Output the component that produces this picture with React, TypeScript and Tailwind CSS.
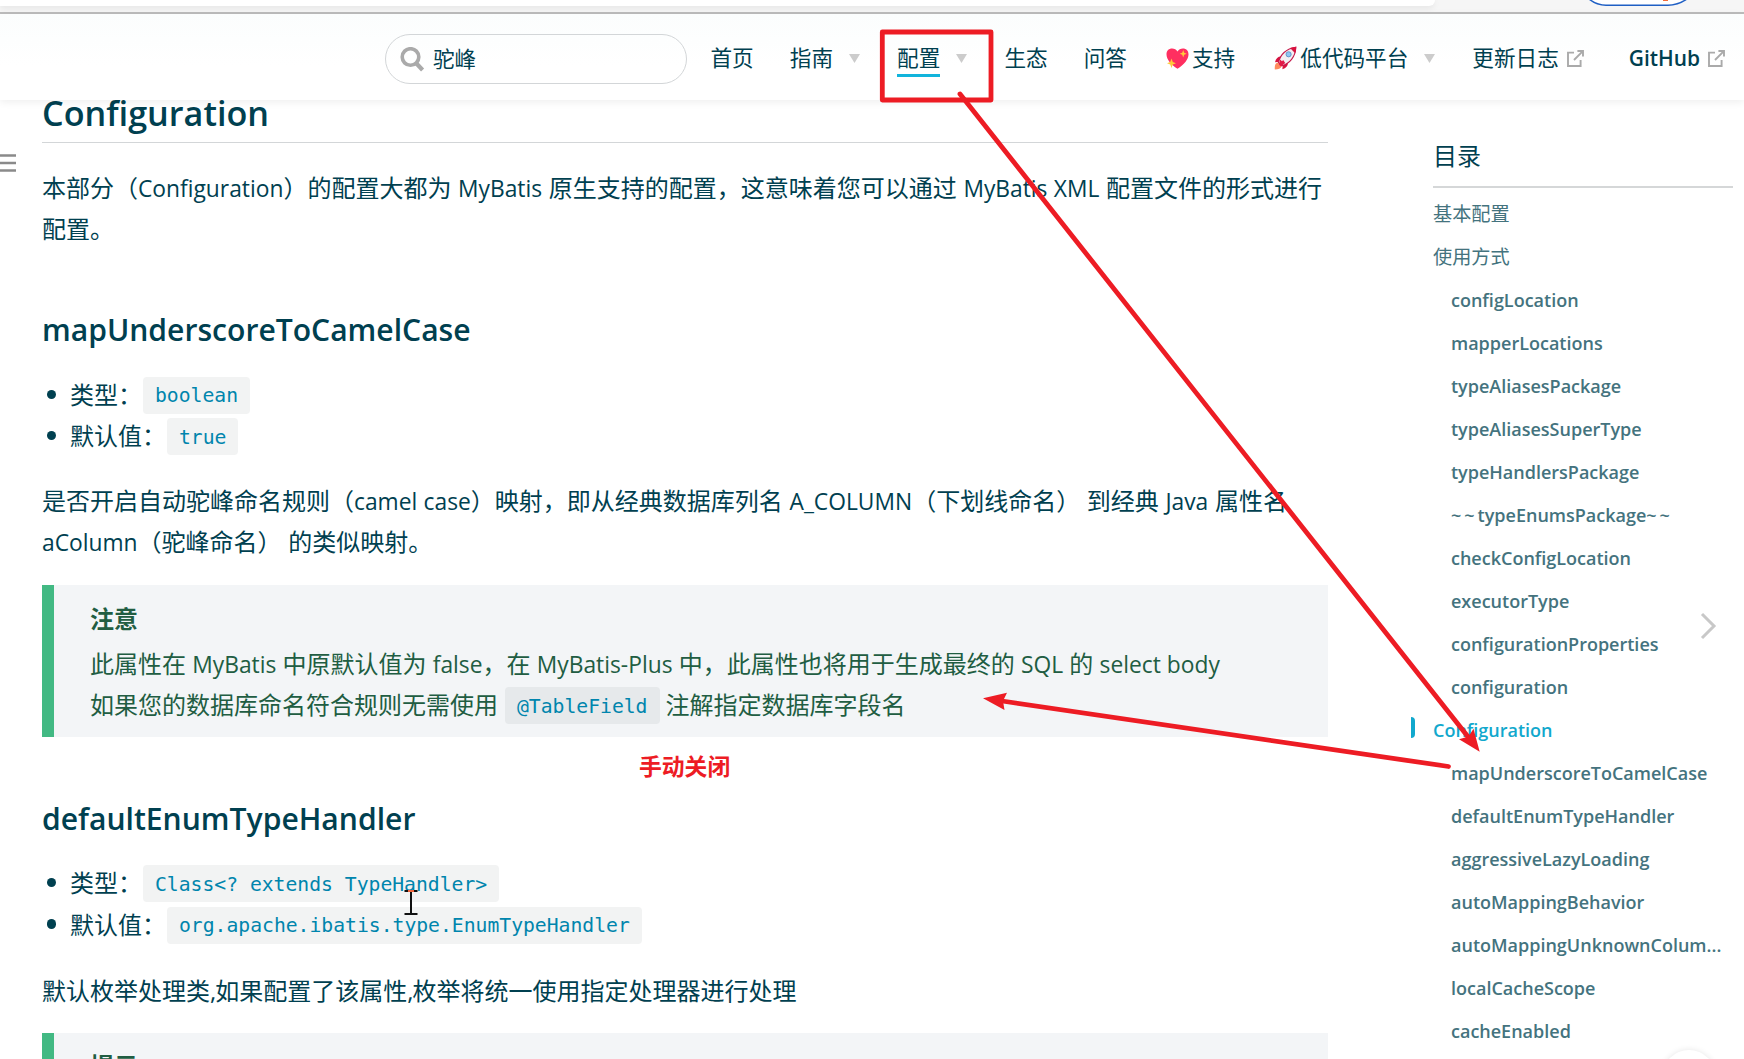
import type { ReactNode } from "react";

/* Latin run set slightly smaller than the surrounding Chinese text */
function L({ children }: { children: ReactNode }) {
  return <span className="text-[22.8px] leading-none">{children}</span>;
}

function Code({ children }: { children: ReactNode }) {
  return (
    <code className="mt-[2px] inline-flex h-[37px] items-center rounded bg-[rgba(27,31,35,0.055)] px-3 pt-0.5 align-middle font-['DejaVu_Sans_Mono',monospace] text-[19.72px] leading-none whitespace-pre text-[#0085ad]">
      {children}
    </code>
  );
}

function Item({ label, children }: { label: string; children: ReactNode }) {
  return (
    <li className="flex h-[41.4px] items-center">
      <span className="mr-[15px] ml-[4.500px] size-[9.500px] rounded-full bg-[#004050]" />
      <span className="mr-px -ml-px leading-[41px]">{label}</span>
      <Code>{children}</Code>
    </li>
  );
}

function H3({ children }: { children: ReactNode }) {
  return <h3 className="text-[30.1px] leading-[42px] font-semibold">{children}</h3>;
}

function Caret() {
  return (
    <svg className="mr-px ml-[16px] h-[9px] w-[11px]" viewBox="0 0 11 9">
      <path d="M0 0H11L5.5 9Z" fill="#ccc" />
    </svg>
  );
}

function External() {
  return (
    <svg className="mr-[9px] ml-2 size-[17px]" viewBox="0 0 17 17" fill="none" stroke="#aaa" strokeWidth="1.9">
      <path d="M7 2.6H1V16H13.6V10" />
      <path d="M10.4 1H16V6.4M15.6 1.4L7 10" />
    </svg>
  );
}

function Heart() {
  return (
    <svg className="mr-[3px] ml-[3px] h-[23px] w-[23px]" viewBox="0 0 23 23">
      <path d="M11.5 21.8C5 17.5 0.5 12.5 0.5 7.2 0.5 3.5 3 1.4 6 1.4c2.400 0 4.400 1.200 5.500 3.200C12.600 2.600 14.600 1.400 17 1.400c3 0 5.500 2.100 5.500 5.800 0 5.300-4.500 10.300-11 14.600Z" fill="#ff2f60" />
      <path d="M17.200 3l1 2.700 2.500 1-2.500 1-1 2.700-1-2.700-2.500-1 2.500-1ZM5.500 11.500l1.300 3.500 3.200 1.200-3.200 1.200-1.300 3.500-1.300-3.500L1 16.200 4.200 15Z" fill="#ffc93a" />
    </svg>
  );
}

function Rocket() {
  return (
    <svg className="mr-[3px] ml-[3px] h-[24px] w-[23px]" viewBox="0 0 23 24">
      <path d="M0.800 23.500C0.500 19.500 1.500 16.800 4 16.500l3.500 3.800C6.800 22.500 4.500 23.500 0.800 23.500Z" fill="#ff8a5c" />
      <path d="M7 10.500C4 10.500 1.800 12.500 1 16.200l4.500-.5ZM14 17c0 3-2 5.200-5.600 6.300l.4-4.800Z" fill="#d8123f" />
      <path d="M4.500 16.500C6 9 12 2.500 21.800 1.200 21.500 11 15.500 17.500 8 19.800Z" fill="#f3eef2" stroke="#c4184a" strokeWidth="1.100" />
      <path d="M16 1.900C18 1.400 20 1.100 22.200 0.800c0 2.400-.3 4.400-1 6.400Z" fill="#d8123f" />
      <circle cx="14.600" cy="8.300" r="2.600" fill="#8ec5f4" stroke="#4b7fb5" strokeWidth=".7" />
      <path d="M5 18.800L6 13.500l2 1.800 1.200-1.300 2 3-4.200 3.500Z" fill="#e11a48" />
    </svg>
  );
}

const toc: [string, "top" | "sub" | "active"][] = [
  ["基本配置", "top"],
  ["使用方式", "top"],
  ["configLocation", "sub"],
  ["mapperLocations", "sub"],
  ["typeAliasesPackage", "sub"],
  ["typeAliasesSuperType", "sub"],
  ["typeHandlersPackage", "sub"],
  ["~~typeEnumsPackage~~", "sub"],
  ["checkConfigLocation", "sub"],
  ["executorType", "sub"],
  ["configurationProperties", "sub"],
  ["configuration", "sub"],
  ["Configuration", "active"],
  ["mapUnderscoreToCamelCase", "sub"],
  ["defaultEnumTypeHandler", "sub"],
  ["aggressiveLazyLoading", "sub"],
  ["autoMappingBehavior", "sub"],
  ["autoMappingUnknownColum...", "sub"],
  ["localCacheScope", "sub"],
  ["cacheEnabled", "sub"],
];

const tocClass = {
  top: "text-[19.2px] text-[#44737e]",
  sub: "pt-[0.600px] pl-[18px] text-[18px] font-semibold text-[#44737e]",
  active: "pt-[0.600px] text-[18px] font-semibold text-[#11a8cd]",
};

/* Tildes are spaced wider than the letters they surround */
function TocLabel({ text }: { text: string }) {
  return text.split(/(~~)/).map((part, i) =>
    part === "~~" ? (
      <span key={i} className="tracking-[3px]">{part}</span>
    ) : (
      part
    ),
  );
}

function BrowserEdge() {
  return (
    <div className="relative h-[14px] shrink-0 overflow-hidden border-b-2 border-[#bcbcbc] bg-[#f6f6f6]">
      <div className="h-1.5 w-[1435px] rounded-br-[16px] bg-white shadow-[0_2px_6px_rgba(0,0,0,0.08)]" />
      <svg className="absolute top-0 left-[1586px] h-[8px] w-[106px]" viewBox="0 0 106 8" fill="none">
        <path d="M3 -1C8 3 13 5.200 20 5.200H82C89 5.200 95 3 101 -1" fill="#fff" stroke="#1f5fc4" strokeWidth="1.500" />
        <path d="M77 0h5" stroke="#f26b3a" strokeWidth="2" />
      </svg>
    </div>
  );
}

function Header() {
  return (
    <header className="relative z-10 flex h-[86px] shrink-0 items-center bg-linear-to-b from-[#fbfdfd] to-white to-60% pt-[2px] pl-[385px] text-[21.6px] leading-[40px] whitespace-nowrap shadow-[0_2px_8px_rgba(0,0,0,0.07)]">
      <div className="mt-px flex h-[50px] w-[302px] shrink-0 items-center rounded-full border border-[#d3d6d8] pl-[14px]">
        <svg className="mt-px size-[25px]" viewBox="0 0 25 25" fill="none" stroke="#aaa">
          <circle cx="10.500" cy="10" r="8.300" strokeWidth="3.600" />
          <path d="M16 16l6.600 7" strokeWidth="4.200" />
        </svg>
        <span className="ml-[8px]">驼峰</span>
      </div>
      <nav className="ml-[23.500px] flex items-center gap-[36.100px]">
        <span>首页</span>
        <span className="flex items-center">指南<Caret /></span>
        <span className="flex items-center">
          <span className="relative">
            配置
            <span className="absolute inset-x-0 bottom-px h-[3px] bg-[#11b4dc]" />
          </span>
          <Caret />
        </span>
        <span>生态</span>
        <span>问答</span>
        <span className="flex items-center"><Heart />支持</span>
        <span className="flex items-center"><Rocket />低代码平台<Caret /></span>
        <span className="flex items-center">更新日志<External /></span>
        <span className="flex items-center text-[20.9px] font-semibold">GitHub<External /></span>
      </nav>
    </header>
  );
}

function Annotations() {
  return (
    <>
      <span className="absolute top-[752px] left-[639px] z-20 text-[22.8px] leading-[30px] font-bold whitespace-nowrap text-[#ed1c24]">
        手动关闭
      </span>
      <svg className="absolute inset-0 z-20 h-[1059px] w-[1744px]" viewBox="0 0 1744 1059" fill="none" stroke="#ed1c24" strokeWidth="4.800" strokeLinecap="round">
        <rect x="882.300" y="32" width="108.700" height="68" strokeLinejoin="round" />
        <path d="M960 94L1469 738M1448.500 766.500L1002 701" />
        <path d="M1479.700 751.700L1459 739.300L1468.500 736.500L1473.500 728.700ZM983 698.300L1007 692.700L1003 701L1004.500 710Z" fill="#ed1c24" stroke="none" />
      </svg>
      <svg className="absolute top-[889px] left-[404px] z-20 h-[27px] w-[15px]" viewBox="0 0 15 27" fill="none" stroke="#111" strokeWidth="2">
        <path d="M7 2V25M0.500 25H13.500M0.500 2H4M10 2H13.500" />
        <path d="M4 2H10" stroke="#f2653c" />
      </svg>
    </>
  );
}

export default function App() {
  return (
    <div className="relative flex h-[1059px] w-[1744px] flex-col overflow-hidden bg-white font-['Open_Sans','Noto_Sans_CJK_SC',sans-serif] text-2xl text-[#004050]">
      <BrowserEdge />
      <Header />
      <div className="flex">
        <div className="w-[42px] shrink-0 pt-[54px]">
          <svg className="h-[19px] w-4" viewBox="0 0 16 19" stroke="#8a8a8a" strokeWidth="2.500">
            <path d="M0 1.500H16M0 9H16M0 16.500H16" />
          </svg>
        </div>
        <main className="w-[1286px] shrink-0 leading-[40.8px] whitespace-nowrap">
          <h2 className="h-[43px] border-b border-[#d3d6d8] text-[34.2px] leading-[26px] font-semibold">Configuration</h2>
          <p className="mt-[25px] [word-spacing:0.4px]">
            本部分（<L>Configuration</L>）的配置大都为 <L>MyBatis</L> 原生支持的配置，这意味着您可以通过 <L>MyBatis XML</L> 配置文件的形式进行
            <br />
            配置。
          </p>
          <div className="mt-[59px]">
            <H3>mapUnderscoreToCamelCase</H3>
          </div>
          <ul className="mt-[23px]">
            <Item label="类型：">boolean</Item>
            <Item label="默认值：">true</Item>
          </ul>
          <p className="mt-[25px] [word-spacing:0.4px]">
            是否开启自动驼峰命名规则（<L>camel case</L>）映射，即从经典数据库列名 <L>A_COLUMN</L>（下划线命名） 到经典 <L>Java</L> 属性名
            <br />
            <L>aColumn</L>（驼峰命名） 的类似映射。
          </p>
          <section className="mt-[22.400px] h-[152px] border-l-[12px] border-[#42b983] bg-[#f3f5f7] pt-[13.600px] pl-9 text-[#215d42]">
            <p className="mb-[4px] font-bold">注意</p>
            <p>此属性在 <L>MyBatis</L> 中原默认值为 <L>false</L>，在 <L>MyBatis-Plus</L> 中，此属性也将用于生成最终的 <L>SQL</L> 的 <L>select body</L></p>
            <p className="flex items-center gap-[7px]">
              如果您的数据库命名符合规则无需使用
              <Code>@TableField</Code>
              <span className="-ml-px">注解指定数据库字段名</span>
            </p>
          </section>
          <div className="mt-[60.600px]">
            <H3>defaultEnumTypeHandler</H3>
          </div>
          <ul className="mt-[22px]">
            <Item label="类型：">{"Class<? extends TypeHandler>"}</Item>
            <Item label="默认值：">org.apache.ibatis.type.EnumTypeHandler</Item>
          </ul>
          <p className="mt-[26px]">
            默认枚举处理类<span className="-mr-px">,</span>如果配置了该属性<span className="-mr-px">,</span>枚举将统一使用指定处理器进行处理
          </p>
          <section className="mt-[21px] h-[152px] border-l-[12px] border-[#42b983] bg-[#f3f5f7] pt-[13px] pl-9 font-bold text-[#215d42]">
            提示
          </section>
        </main>
        <aside className="ml-[105px] w-[300px] shrink-0 whitespace-nowrap">
          <div className="h-[88px] border-b-2 border-[#d5d7d8] pt-[36px] leading-[40px]">目录</div>
          <ul className="mt-[4px]">
            {toc.map(([label, kind]) => (
              <li key={label} className="relative h-[43px] leading-[43px]">
                {kind === "active" && (
                  <span className="absolute top-[9px] left-[-22px] h-[21px] w-1 rounded-r bg-[#11a8cd]" />
                )}
                <div className={tocClass[kind]}>
                  <TocLabel text={label} />
                </div>
              </li>
            ))}
          </ul>
        </aside>
      </div>
      <svg className="absolute top-[611px] left-[1699px] h-[30px] w-[18px]" viewBox="0 0 18 30" fill="none" stroke="#c8c8c8" strokeWidth="3">
        <path d="M3 3L15 15L3 27" />
      </svg>
      <div className="absolute top-[1050px] left-[1662px] size-[54px] rounded-full bg-white shadow-[0_0_6px_rgba(0,0,0,0.1)]" />
      <Annotations />
    </div>
  );
}
